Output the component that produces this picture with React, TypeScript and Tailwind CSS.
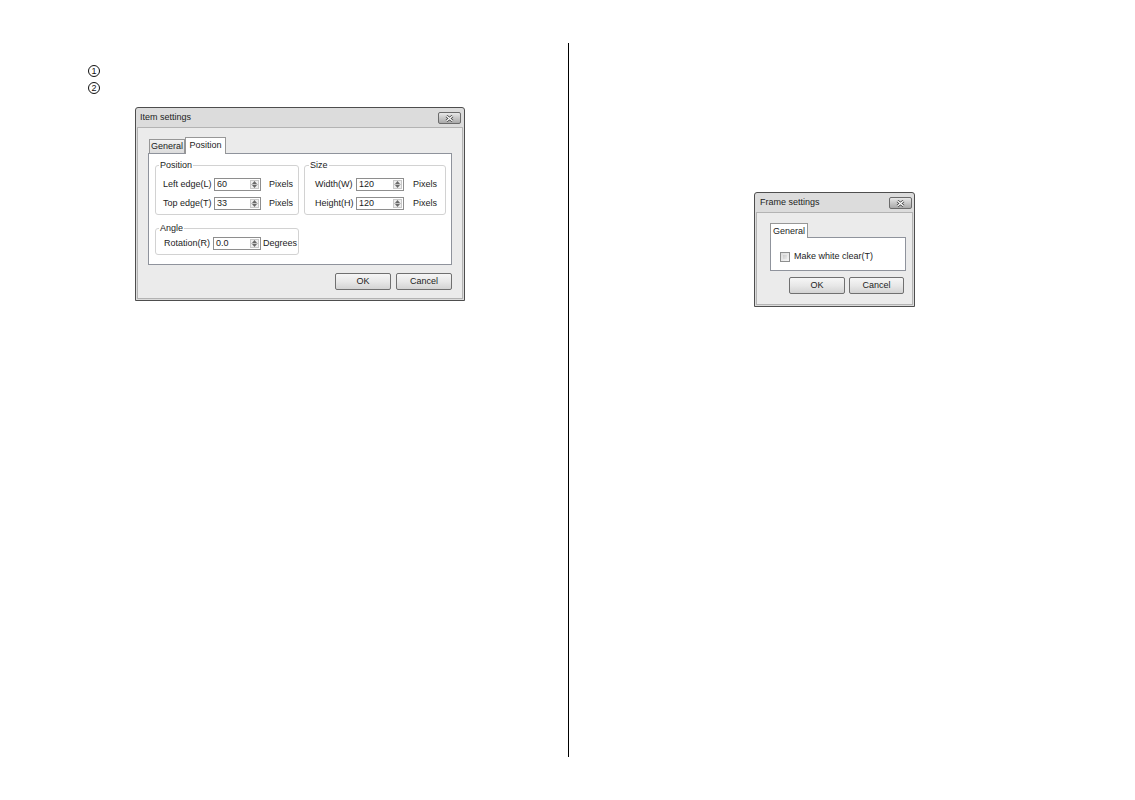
import React from "react";

function CloseButton() {
  return (
    <div className="w-[23px] h-[12px] rounded-[2px] border border-[#6b6b6b] bg-gradient-to-b from-[#e8e8e8] to-[#a9a9a9] flex items-center justify-center">
      <svg width="9" height="7" viewBox="0 0 9 7">
        <path d="M1.5 1 L7.5 6 M7.5 1 L1.5 6" stroke="#3d3d3d" strokeWidth="2.8" />
        <path d="M1.5 1 L7.5 6 M7.5 1 L1.5 6" stroke="#ffffff" strokeWidth="1.3" />
      </svg>
    </div>
  );
}

function Button({ label, className }: { label: string; className: string }) {
  return (
    <div
      className={`rounded-[2px] border border-[#707070] bg-gradient-to-b from-[#f6f6f6] via-[#e8e8e8] to-[#d3d3d3] flex items-center justify-center text-[9px] text-[#1c1c1c] ${className}`}
    >
      {label}
    </div>
  );
}

function SpinInput({ value, width }: { value: string; width: string }) {
  return (
    <div className={`flex h-[13px] border border-[#8e8e8e] bg-white ${width}`}>
      <span className="pl-[2px] text-[9px] leading-[11px] text-[#1c1c1c]">{value}</span>
      <div className="ml-auto my-[1px] mr-[1px] w-[9px] flex flex-col border border-[#c9c9c9] bg-[#eeeeee]">
        <div className="flex-1 flex items-center justify-center border-b border-[#c4c4c4]">
          <svg width="5" height="3" viewBox="0 0 5 3">
            <path d="M0 3 L2.5 0 L5 3 Z" fill="#6a6a6a" />
          </svg>
        </div>
        <div className="flex-1 flex items-center justify-center">
          <svg width="5" height="3" viewBox="0 0 5 3">
            <path d="M0 0 L2.5 3 L5 0 Z" fill="#6a6a6a" />
          </svg>
        </div>
      </div>
    </div>
  );
}

function Group({
  title,
  className,
  legendClass,
  children,
}: {
  title: string;
  className: string;
  legendClass: string;
  children: React.ReactNode;
}) {
  return (
    <fieldset className={`border border-[#d2d2d2] rounded-[3px] ${className}`}>
      <legend className={`px-[1px] text-[9px] leading-[11px] text-[#1c1c1c] ${legendClass}`}>{title}</legend>
      {children}
    </fieldset>
  );
}

function Row({
  label,
  labelW,
  value,
  inputW,
  unit,
  unitMl,
}: {
  label: string;
  labelW: string;
  value: string;
  inputW: string;
  unit: string;
  unitMl: string;
}) {
  return (
    <div className="flex items-center h-[13px] text-[9px] text-[#1c1c1c]">
      <span className={labelW}>{label}</span>
      <SpinInput value={value} width={inputW} />
      <span className={unitMl}>{unit}</span>
    </div>
  );
}

function ItemSettings() {
  return (
    <div className="w-[330px] h-[194px] border border-[#4e4e4e] bg-[#dcdcdc] flex flex-col rounded-t-[3px]">
      <div className="h-[19px] flex items-center justify-between pl-[4px] pr-[3px] pt-[1px]">
        <span className="text-[9px] text-[#1c1c1c]">Item settings</span>
        <CloseButton />
      </div>
      <div className="flex-1 mx-[1px] mb-[1px] border border-[#b3b3b3] bg-[#ebebeb] pl-[10px] pr-[10px] pt-[9px]">
        <div className="flex items-end h-[16px] text-[9px] text-[#1c1c1c]">
          <div className="ml-[1px] h-[14px] w-[36px] border border-b-0 border-[#979797] bg-gradient-to-b from-[#f2f2f2] to-[#dcdcdc] flex items-center justify-center">
            General
          </div>
          <div className="relative z-10 -mb-px h-[17px] w-[41px] border border-b-0 border-[#979797] bg-white flex items-start justify-center pt-[1px]">
            Position
          </div>
        </div>
        <div className="h-[112px] border border-[#8f939c] bg-white pl-[6px] pt-[6px]">
          <div className="flex gap-[5px]">
            <Group title="Position" legendClass="-ml-[4px]" className="w-[144px] pl-[7px] pt-[7px] pb-[4px]">
              <div className="flex flex-col gap-[6px]">
                <Row label="Left edge(L)" labelW="w-[51px]" value="60" inputW="w-[47px]" unit="Pixels" unitMl="ml-[8px]" />
                <Row label="Top edge(T)" labelW="w-[51px]" value="33" inputW="w-[47px]" unit="Pixels" unitMl="ml-[8px]" />
              </div>
            </Group>
            <Group title="Size" legendClass="-ml-[6px]" className="w-[142px] pl-[10px] pt-[7px] pb-[4px]">
              <div className="flex flex-col gap-[6px]">
                <Row label="Width(W)" labelW="w-[41px]" value="120" inputW="w-[48px]" unit="Pixels" unitMl="ml-[9px]" />
                <Row label="Height(H)" labelW="w-[41px]" value="120" inputW="w-[48px]" unit="Pixels" unitMl="ml-[9px]" />
              </div>
            </Group>
          </div>
          <Group title="Angle" legendClass="-ml-[5px]" className="mt-[8px] w-[144px] pl-[8px] pt-[3px] pb-[4px]">
            <Row label="Rotation(R)" labelW="w-[49px]" value="0.0" inputW="w-[48px]" unit="Degrees" unitMl="ml-[2px]" />
          </Group>
        </div>
        <div className="mt-[8px] flex justify-end gap-[5px]">
          <Button label="OK" className="w-[56px] h-[17px]" />
          <Button label="Cancel" className="w-[56px] h-[17px]" />
        </div>
      </div>
    </div>
  );
}

function FrameSettings() {
  return (
    <div className="w-[161px] h-[115px] border border-[#4e4e4e] bg-[#dcdcdc] flex flex-col rounded-t-[3px]">
      <div className="h-[19px] flex items-center justify-between pl-[5px] pr-[2px] pt-[1px]">
        <span className="text-[9px] text-[#1c1c1c]">Frame settings</span>
        <CloseButton />
      </div>
      <div className="flex-1 mx-[1px] mb-[1px] border border-[#b3b3b3] bg-[#ebebeb] pl-[13px] pr-[8px] pt-[9px]">
        <div className="flex items-end h-[15px] text-[9px] text-[#1c1c1c]">
          <div className="relative z-10 -mb-px h-[15px] w-[38px] border border-b-0 border-[#979797] bg-white flex items-start justify-center pt-[1px]">
            General
          </div>
        </div>
        <div className="h-[34px] w-[136px] border border-[#8f939c] bg-white pl-[9px] pt-[12px]">
          <div className="flex items-center gap-[4px] text-[9px] text-[#1c1c1c]">
            <div className="w-[10px] h-[10px] border border-[#8e8f8f] bg-gradient-to-br from-[#dcdcdc] to-[#f6f6f6] p-[2px]">
              <div className="w-full h-full bg-gradient-to-br from-[#cbcbcb] to-[#e9e9e9]" />
            </div>
            <span>Make white clear(T)</span>
          </div>
        </div>
        <div className="mt-[6px] flex gap-[4px] pl-[19px]">
          <Button label="OK" className="w-[57px] h-[17px]" />
          <Button label="Cancel" className="w-[56px] h-[17px]" />
        </div>
      </div>
    </div>
  );
}

function Circled({ n }: { n: string }) {
  return (
    <div className="w-[12px] h-[12px] rounded-full border border-[#111] flex items-center justify-center text-[9px] leading-none text-[#111]">
      {n}
    </div>
  );
}

export default function App() {
  return (
    <div className="w-[1135px] h-[800px] bg-white flex font-['Liberation_Sans',Arial,sans-serif]">
      <div className="w-[568px] pl-[88px] pt-[65px]">
        <div className="flex flex-col gap-[5px]">
          <Circled n="1" />
          <Circled n="2" />
        </div>
        <div className="ml-[47px] mt-[13px]">
          <ItemSettings />
        </div>
      </div>
      <div className="mt-[43px] h-[714px] w-px bg-black" />
      <div className="pl-[185px] pt-[192px]">
        <FrameSettings />
      </div>
    </div>
  );
}
